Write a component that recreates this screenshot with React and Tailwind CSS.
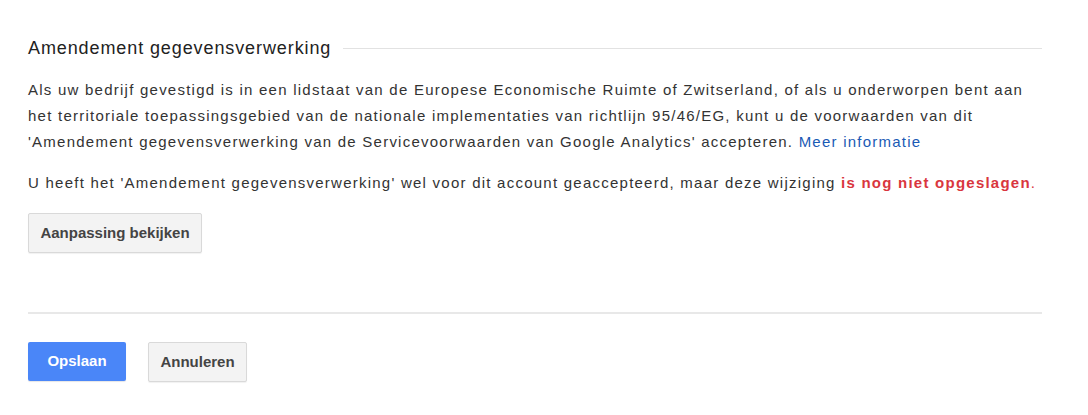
import React from 'react';

const GreyButton = ({ children, className = '' }) => (
  <button
    className={`h-[40px] rounded-[2px] border border-[#d9d9d9] bg-[#f3f3f3] text-[15px] font-bold text-[#444] shadow-[0_1px_1px_rgba(0,0,0,0.06)] ${className}`}
  >
    {children}
  </button>
);

export default function App() {
  return (
    <div
      className="h-[415px] w-[1088px] bg-white"
      style={{ fontFamily: '"Liberation Sans", Arial, sans-serif' }}
    >
      <div className="w-[1042px] pl-[28px] pt-[37px]">
        <div className="flex items-center gap-[12px]">
          <h2 className="text-[18px] font-normal leading-[22px] tracking-[0.9px] text-[#222]">
            Amendement gegevensverwerking
          </h2>
          <div className="h-px flex-1 bg-[#e2e2e2]" />
        </div>

        <p className="mt-[18px] whitespace-nowrap text-[15px] leading-[26px] tracking-[1.24px] text-[#333]">
          Als uw bedrijf gevestigd is in een lidstaat van de Europese Economische Ruimte of Zwitserland, of als u
          onderworpen bent aan
          <br />
          het territoriale toepassingsgebied van de nationale implementaties van richtlijn 95/46/EG, kunt u de
          voorwaarden van dit
          <br />
          'Amendement gegevensverwerking van de Servicevoorwaarden van Google Analytics' accepteren.{' '}
          <span className="text-[#1a5ab5]">Meer informatie</span>
        </p>

        <p className="mt-[15px] whitespace-nowrap text-[15px] leading-[26px] tracking-[1.24px] text-[#333]">
          U heeft het 'Amendement gegevensverwerking' wel voor dit account geaccepteerd, maar deze wijziging{' '}
          <span className="font-bold text-[#d9363e]">is nog niet opgeslagen</span>
          <span className="text-[#d9363e]">.</span>
        </p>

        <GreyButton className="mt-[17px] w-[174px]">Aanpassing bekijken</GreyButton>

        <div className="mt-[59px] h-[2px] bg-[#e8e8e8]" />

        <div className="mt-[28px] flex gap-[22px]">
          <button className="h-[39px] w-[98px] rounded-[2px] bg-[#4a86f8] text-[15px] font-bold text-white shadow-[0_1px_1px_rgba(0,0,0,0.1)]">
            Opslaan
          </button>
          <GreyButton className="w-[99px]">Annuleren</GreyButton>
        </div>
      </div>
    </div>
  );
}
